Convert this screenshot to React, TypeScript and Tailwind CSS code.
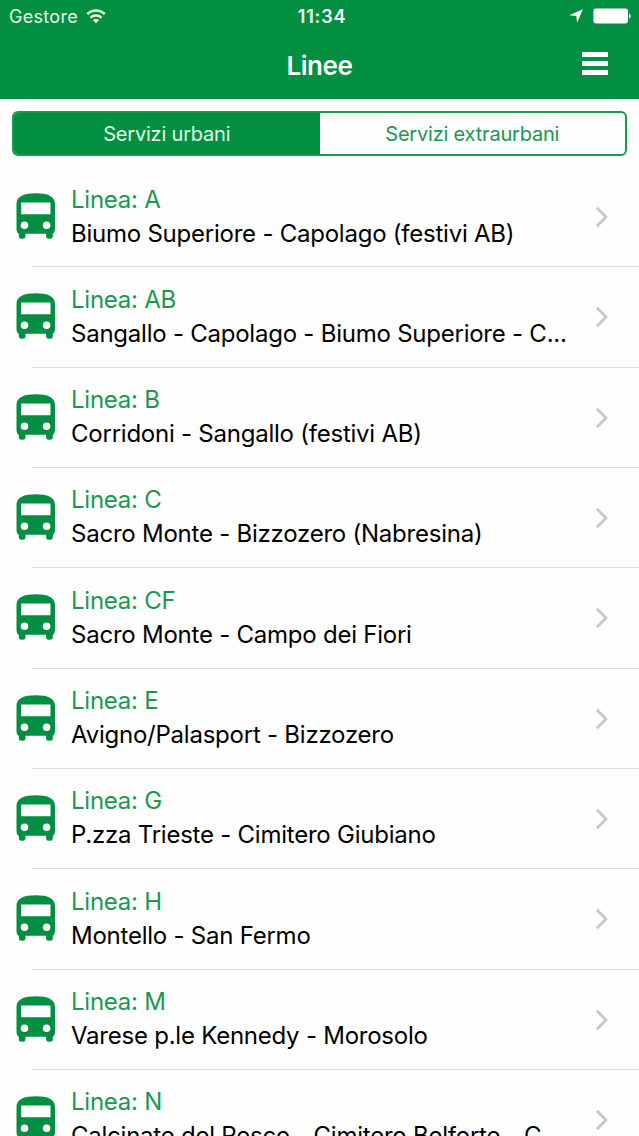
type Line = {
  code: string
  route: string
}

const lines: Line[] = [
  { code: "A", route: "Biumo Superiore - Capolago (festivi AB)" },
  { code: "AB", route: "Sangallo - Capolago - Biumo Superiore - C..." },
  { code: "B", route: "Corridoni - Sangallo (festivi AB)" },
  { code: "C", route: "Sacro Monte - Bizzozero (Nabresina)" },
  { code: "CF", route: "Sacro Monte - Campo dei Fiori" },
  { code: "E", route: "Avigno/Palasport - Bizzozero" },
  { code: "G", route: "P.zza Trieste - Cimitero Giubiano" },
  { code: "H", route: "Montello - San Fermo" },
  { code: "M", route: "Varese p.le Kennedy - Morosolo" },
  { code: "N", route: "Calcinate del Pesce - Cimitero Belforte - C..." },
]

function WifiIcon() {
  return (
    <svg width="20" height="15" viewBox="0 0 20 15" fill="none" stroke="currentColor" strokeWidth="2.5">
      <path d="M1.300 5a12.600 12.600 0 0 1 17.400 0" />
      <path d="M4.500 8.700a8.200 8.200 0 0 1 11 0" />
      <path d="M10 14.200 6.900 11.300a4.400 4.400 0 0 1 6.200 0z" fill="currentColor" stroke="none" />
    </svg>
  )
}

function LocationIcon() {
  return (
    <svg width="14" height="14" viewBox="0 0 13 13" fill="currentColor">
      <path d="M12.800.2 7.600 12.800 6.700 6.500.2 5.700z" />
    </svg>
  )
}

function BatteryIcon() {
  return (
    <svg width="38" height="16" viewBox="0 0 38 16" fill="currentColor">
      <rect x=".4" y=".6" width="34.600" height="14.800" rx="2.400" />
      <path d="M36 5.400c1.200.3 1.700 1.300 1.700 2.600s-.5 2.300-1.700 2.600z" />
    </svg>
  )
}

function BusIcon() {
  return (
    <svg width="40" height="46" viewBox="0 0 40 46" className="shrink-0 text-[#038f41]">
      <path
        fill="currentColor"
        fillRule="evenodd"
        d="M.5 11C.5 3.200 8 .2 19.800.2S39 3.200 39 11v25c0 2.300-.8 4-2.200 5v2.200c0 1.700-1 2.500-2.700 2.500h-1.300c-1.700 0-2.700-.8-2.700-2.500v-2.400H9.500v2.400c0 1.700-1 2.500-2.700 2.500H5.500c-1.700 0-2.700-.8-2.700-2.500V41C1.300 40 .5 38.300.5 36zM5.200 9.600v11.700h29.300V9.600zM8.500 28.400a3.800 3.800 0 1 0 0 7.600 3.800 3.800 0 0 0 0-7.600zM30.600 28.400a3.800 3.800 0 1 0 0 7.600 3.800 3.800 0 0 0 0-7.600z"
      />
    </svg>
  )
}

function LineRow({ line }: { line: Line }) {
  return (
    <li className="flex h-[100.33px] items-start pl-[15.5px]">
      <div className="pt-[26.5px]">
        <BusIcon />
      </div>
      <div className="flex h-full min-w-0 flex-1 flex-col pt-4 pl-[15.5px] text-2xl leading-[34px] tracking-[-0.235px] whitespace-nowrap">
        <p className="text-[#1a9850]">Linea: {line.code}</p>
        <p className="text-black">{line.route}</p>
      </div>
      <svg
        width="14"
        height="22"
        viewBox="0 0 14 22"
        className="mt-[39.5px] mr-[30px] shrink-0"
        fill="none"
        stroke="#c7c7cc"
        strokeWidth="2.8"
      >
        <path d="m1.800 1.800 9.200 9.200-9.200 9.200" />
      </svg>
    </li>
  )
}

export default function App() {
  return (
    <div className="flex h-[1136px] w-[639px] flex-col overflow-hidden bg-[#fefefe] font-['Inter','Liberation_Sans',sans-serif]">
      <header className="h-[98.5px] shrink-0 bg-[#038f41] text-white">
        <div className="grid h-8 grid-cols-3 items-center pr-2 pl-[9px] text-[18px]">
          <div className="flex items-center gap-2 text-[#e3f8e8]">
            <span className="tracking-[0.3px]">Gestore</span>
            <WifiIcon />
          </div>
          <span className="pl-1 text-center font-semibold tracking-[0.8px]">11:34</span>
          <div className="flex items-center justify-end gap-2.5">
            <LocationIcon />
            <BatteryIcon />
          </div>
        </div>
        <div className="grid h-[63px] grid-cols-[1fr_auto_1fr] items-center pr-[31px] pl-[31px]">
          <h1 className="col-start-2 pt-[3px] text-[26px] font-semibold tracking-[-0.4px]">Linee</h1>
          <button className="flex flex-col gap-[4.5px] justify-self-end" aria-label="Menu">
            <span className="h-[4.4px] w-[26px] bg-white" />
            <span className="h-[4.4px] w-[26px] bg-white" />
            <span className="h-[4.4px] w-[26px] bg-white" />
          </button>
        </div>
      </header>
      <div className="mx-3 mt-[12.5px] flex h-[45px] shrink-0 overflow-hidden rounded-md border-2 border-[#1a9850] text-[20px] tracking-[-0.2px]">
        <button className="flex-1 bg-[#038f41] text-[#e3f8e8]">Servizi urbani</button>
        <button className="flex-1 text-[#1a9850]">Servizi extraurbani</button>
      </div>
      <ul className="mt-[10.5px] flex flex-col">
        {lines.map((line, i) => (
          <div key={line.code} className="relative">
            <LineRow line={line} />
            {i < lines.length - 1 && <div className="absolute right-0 -bottom-[0.4px] left-8 h-px bg-[#dddce0]" />}
          </div>
        ))}
      </ul>
    </div>
  )
}
